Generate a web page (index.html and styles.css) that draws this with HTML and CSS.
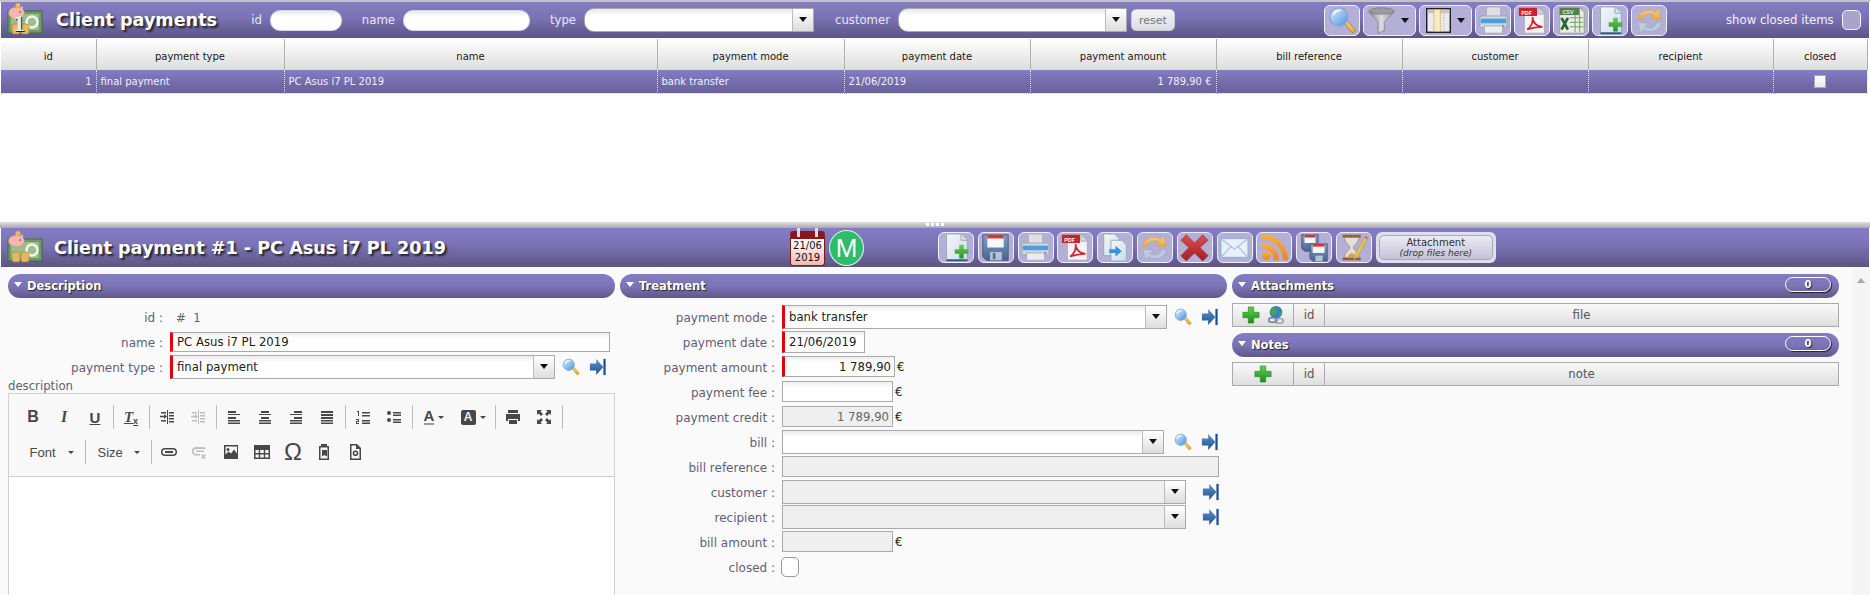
FILE: index.html
```html
<!DOCTYPE html>
<html lang="en">
<head>
<meta charset="utf-8">
<title>Client payments</title>
<link rel="stylesheet" href="styles.css">
</head>
<body>
<svg class="sprite" xmlns="http://www.w3.org/2000/svg" aria-hidden="true">
<defs>
<linearGradient id="gLens" x1="0" y1="0" x2="1" y2="1"><stop offset="0" stop-color="#e8f4ff"/><stop offset="1" stop-color="#3f8fe0"/></linearGradient>
<linearGradient id="gFunnel" x1="0" y1="0" x2="1" y2="0"><stop offset="0" stop-color="#7d7d7d"/><stop offset=".5" stop-color="#e2e2e2"/><stop offset="1" stop-color="#8d8d8d"/></linearGradient>
<linearGradient id="gPage" x1="0" y1="0" x2="1" y2="1"><stop offset="0" stop-color="#ffffff"/><stop offset="1" stop-color="#cfe0f2"/></linearGradient>
<linearGradient id="gPlus" x1="0" y1="0" x2="0" y2="1"><stop offset="0" stop-color="#5fd04a"/><stop offset="1" stop-color="#1b8e1b"/></linearGradient>
<linearGradient id="gOrange" x1="0" y1="0" x2="0" y2="1"><stop offset="0" stop-color="#ffd77a"/><stop offset="1" stop-color="#eda52f"/></linearGradient>
<linearGradient id="gRed" x1="0" y1="0" x2="0" y2="1"><stop offset="0" stop-color="#e2423f"/><stop offset="1" stop-color="#a30f14"/></linearGradient>
<linearGradient id="gFloppy" x1="0" y1="0" x2="0" y2="1"><stop offset="0" stop-color="#7ba0c6"/><stop offset="1" stop-color="#3e5f86"/></linearGradient>
<linearGradient id="gRss" x1="0" y1="0" x2="0" y2="1"><stop offset="0" stop-color="#ffb13c"/><stop offset="1" stop-color="#f08410"/></linearGradient>
<linearGradient id="gGoto" x1="0" y1="0" x2="0" y2="1"><stop offset="0" stop-color="#5f93cf"/><stop offset="1" stop-color="#1f4f90"/></linearGradient>
</defs>
<symbol id="i-search" viewBox="0 0 32 32"><path d="M18 19l3-3 9 10c1 1.500-2 4.500-3.500 3.500z" fill="url(#gOrange)" stroke="#b8791e"/><circle cx="12" cy="12" r="10" fill="url(#gLens)" stroke="#7fa7cf" stroke-width="1.500"/><path d="M6 10a7 7 0 0 1 8-5" stroke="#fff" stroke-width="2" fill="none"/></symbol>
<symbol id="i-funnel" viewBox="0 0 32 32"><ellipse cx="15" cy="6" rx="14" ry="4" fill="#9a9a9a" stroke="#7a7a7a"/><path d="M1 6c2 4 9 9 10 12v12l7-3v-9c1-3 9-8 11-12-4 4-24 4-28 0z" fill="url(#gFunnel)" stroke="#777" stroke-width=".8"/></symbol>
<symbol id="i-cols" viewBox="0 0 32 32"><rect x="3" y="3" width="26" height="26" fill="#f2f2f2" stroke="#111" stroke-width="1.600"/><rect x="4" y="4" width="24" height="4" fill="#c9c9c9"/><rect x="11" y="4" width="7" height="24" fill="#fff3c4" stroke="#e0a020" stroke-dasharray="2 1"/><path d="M22 8v20" stroke="#cfcfcf"/></symbol>
<symbol id="i-print" viewBox="0 0 32 32"><rect x="8" y="1" width="16" height="11" fill="#e2e4e8" stroke="#a5a9b0"/><rect x="1" y="11" width="30" height="13" rx="2" fill="#d5dbe2" stroke="#9aa3ad"/><rect x="2" y="14" width="28" height="5" fill="#3f9ee0"/><rect x="6" y="22" width="20" height="8" fill="#f1f3f5" stroke="#a5a9b0"/><circle cx="27" cy="22" r="1" fill="#d44"/></symbol>
<symbol id="i-pdf" viewBox="0 0 32 32"><path d="M7 2h15l7 7v21H7z" fill="#fafafa" stroke="#aaa"/><path d="M22 2v7h7" fill="#ddd" stroke="#aaa"/><rect x="1" y="2" width="20" height="9" fill="#c9141c"/><path d="M10 26c5-3 7-9 6-14 0 6 5 11 11 11-6 0-12 1-17 3z" fill="none" stroke="#d3141c" stroke-width="1.800"/></symbol>
<symbol id="i-excel" viewBox="0 0 32 32"><path d="M3 2h22l5 5v23H3z" fill="#eef5e6" stroke="#8aa87a"/><rect x="3" y="2" width="22" height="8" fill="#4b7d3a"/><path d="M14 13h15M14 18h15M14 23h15M20 10v19M25 10v19" stroke="#5e9a4a"/><path d="M5 13l7 13M12 13L5 26" stroke="#1e5c1e" stroke-width="3"/></symbol>
<symbol id="i-new" viewBox="0 0 32 32"><path d="M5 1h16l7 7v23H5z" fill="url(#gPage)" stroke="#8aa"/><path d="M21 1v7h7" fill="#dbe7f2" stroke="#8aa"/><path d="M5 29h23v2H5z" fill="#24527f"/><path d="M19 13h5v5h5v5h-5v5h-5v-5h-5v-5h5z" fill="url(#gPlus)"/></symbol>
<symbol id="i-refresh" viewBox="0 0 32 32"><path d="M3 15C4 6 14 2 23 7l3-4 3 12-12-1 4-4C15 7 9 9 8 15z" fill="url(#gOrange)" stroke="#d9a445" stroke-width=".6"/><path d="M29 18c-1 9-11 13-20 8l-3 4-3-12 12 1-4 4c6 3 12 1 13-5z" fill="#bcd0de" stroke="#92a9ba" stroke-width=".6"/></symbol>
<symbol id="i-save" viewBox="0 0 32 32"><path d="M2 2h28v28H6l-4-4z" fill="url(#gFloppy)" stroke="#34506f"/><rect x="7" y="2" width="18" height="14" fill="#fff"/><rect x="7" y="2" width="18" height="4" fill="#d52a2a"/><rect x="10" y="21" width="13" height="9" fill="#b8c6d3"/><rect x="13" y="22" width="3" height="7" fill="#4d6c8c"/></symbol>
<symbol id="i-copy" viewBox="0 0 32 32"><path d="M3 1h12l5 5v19H3z" fill="url(#gPage)" stroke="#8aa"/><path d="M11 8h12l5 5v18H11z" fill="url(#gPage)" stroke="#8aa"/><path d="M9 18h7v-4l7 6-7 6v-4H9z" fill="#2a90dc"/></symbol>
<symbol id="i-del" viewBox="0 0 32 32"><path d="M7 2l9 9 9-9 6 6-9 8 9 9-6 6-9-9-9 9-6-6 9-9-9-8z" fill="url(#gRed)" stroke="#8f1216" stroke-width=".6"/></symbol>
<symbol id="i-mail" viewBox="0 0 32 32"><rect x="1" y="6" width="30" height="21" fill="#f0f6fd" stroke="#90b4d8" stroke-width="1.400"/><path d="M1 6l15 12L31 6M1 27l11-12M31 27L20 15" fill="none" stroke="#a7c4e2" stroke-width="1.400"/></symbol>
<symbol id="i-rss" viewBox="0 0 32 32"><circle cx="7" cy="25" r="5" fill="url(#gRss)"/><path d="M2 11c11 0 19 8 19 19h-6c0-8-5-13-13-13z" fill="url(#gRss)"/><path d="M2 1c16 0 29 13 29 29h-6C25 16 15 7 2 7z" fill="url(#gRss)"/></symbol>
<symbol id="i-multi" viewBox="0 0 32 32"><path d="M2 2h18v18H5l-3-3z" fill="url(#gFloppy)" stroke="#34506f"/><rect x="5" y="2" width="12" height="9" fill="#fff"/><rect x="5" y="2" width="12" height="3" fill="#d52a2a"/><path d="M11 12h19v19H14l-3-3z" fill="url(#gFloppy)" stroke="#34506f"/><rect x="14" y="12" width="13" height="10" fill="#fff"/><rect x="14" y="12" width="13" height="3" fill="#d52a2a"/><rect x="17" y="25" width="8" height="6" fill="#b8c6d3"/></symbol>
<symbol id="i-hour" viewBox="0 0 32 32"><rect x="4" y="2" width="20" height="3" fill="#8a5a22"/><rect x="4" y="27" width="20" height="3" fill="#8a5a22"/><path d="M6 5h16c0 6-6 8-6 11s6 5 6 11H6c0-6 6-8 6-11S6 11 6 5z" fill="#e8e6dc" stroke="#9a8a66"/><path d="M9 27c1-3 4-5 5-5s4 2 5 5z" fill="#d9a441"/><path d="M16 30l2-7 10-18 3 2-10 18z" fill="#ecc84a" stroke="#b7892a" stroke-width=".6"/><path d="M28 5l1-2 3 2-1 2z" fill="#d66"/></symbol>
<symbol id="i-goto" viewBox="0 0 20 20"><path d="M1 6h7V1l8 9-8 9v-5H1z" fill="url(#gGoto)"/><rect x="16" y="1" width="2.500" height="18" fill="#1f4f90"/></symbol>
<symbol id="i-plus" viewBox="0 0 20 20"><path d="M7 1h6v6h6v6h-6v6H7v-6H1V7h6z" fill="url(#gPlus)" stroke="#1d7d1d" stroke-width=".6"/></symbol>
<symbol id="i-globe" viewBox="0 0 20 20"><circle cx="10" cy="7" r="7" fill="#3d7fc4"/><path d="M5 3c3-1 6 0 6 3s-4 2-5 5c-2-2-3-6-1-8zM13 6l3 1-2 4z" fill="#4aa548"/><rect x="2" y="13" width="9" height="5" rx="2.500" fill="none" stroke="#6b7d90" stroke-width="1.600"/><rect x="9" y="14" width="9" height="5" rx="2.500" fill="none" stroke="#8a9bad" stroke-width="1.600"/></symbol>
<symbol id="i-pig" viewBox="0 0 36 34"><rect x="1" y="8" width="34" height="22" fill="#6f9a62" stroke="#466b3f"/><rect x="4" y="11" width="28" height="16" fill="#9dbd8f"/><circle cx="25" cy="19" r="5.500" fill="none" stroke="#f4f7ec" stroke-width="2.400"/><circle cx="11" cy="2.500" r="2.500" fill="#f0c040"/><ellipse cx="9.500" cy="10" rx="8" ry="6" fill="#f2b8b0" stroke="#c98a84" stroke-width=".6"/><path d="M13 5l3-2v4z" fill="#f2b8b0"/><circle cx="13" cy="9" r=".8" fill="#633"/><rect x="5" y="21" width="8" height="10" rx="2" fill="#e2b860" stroke="#a8823a" stroke-width=".6"/><rect x="14" y="21" width="8" height="10" rx="2" fill="#e2b860" stroke="#a8823a" stroke-width=".6"/></symbol>
<symbol id="e-indent" viewBox="0 0 16 16"><path d="M8 1h1v14H8zM10 3h5v1.500h-5zM10 6h5v1.500h-5zM10 9h5v1.500h-5zM10 12h5v1.500h-5zM2 3h5v1.500H2zM2 11h5v1.500H2zM1 6.800h4V5l3 2.500L5 10V8.200H1z"/></symbol>
<symbol id="e-left" viewBox="0 0 16 16"><path d="M2 2h8v2H2zM2 5h12v1H2zM2 8h8v2H2zM2 11h12v1.500H2zM2 13.500h12V15H2z"/></symbol>
<symbol id="e-center" viewBox="0 0 16 16"><path d="M4 2h8v2H4zM2 5h12v1H2zM4 8h8v2H4zM2 11h12v1.500H2zM2 13.500h12V15H2z"/></symbol>
<symbol id="e-right" viewBox="0 0 16 16"><path d="M6 2h8v2H6zM2 5h12v1H2zM6 8h8v2H6zM2 11h12v1.500H2zM2 13.500h12V15H2z"/></symbol>
<symbol id="e-just" viewBox="0 0 16 16"><path d="M2 2h12v2H2zM2 5h12v2H2zM2 8h12v2H2zM2 11h12v1.500H2zM2 13.500h12V15H2z"/></symbol>
<symbol id="e-num" viewBox="0 0 16 16"><path d="M2 2h2v5H3V3H2zM1 10h3v3H2v1h2v1H1v-3h2v-1H1zM7 3h8v1.500H7zM7 6h8v1.500H7zM7 11h8v1.500H7zM7 13.500h8V15H7z"/></symbol>
<symbol id="e-bul" viewBox="0 0 16 16"><circle cx="3" cy="4" r="2"/><circle cx="3" cy="11" r="2"/><path d="M7 3h8v1.500H7zM7 5.500h8V7H7zM7 10h8v1.500H7zM7 12.500h8V14H7z"/></symbol>
<symbol id="e-print" viewBox="0 0 16 16"><path d="M3 1h10v3H3zM1 5h14v7h-2v-2H3v2H1zM4 11h8v4H4z"/></symbol>
<symbol id="e-max" viewBox="0 0 16 16"><path d="M1 1h5L4.500 2.500 7 5 5 7 2.500 4.500 1 6zM15 1v5l-1.500-1.500L11 7 9 5l2.500-2.500L10 1zM1 15v-5l1.500 1.500L5 9l2 2-2.500 2.500L6 15zM15 15h-5l1.500-1.500L9 11l2-2 2.500 2.500L15 10z"/></symbol>
<symbol id="e-link" viewBox="0 0 16 16"><path d="M4 4h8a4 4 0 0 1 0 8H4a4 4 0 0 1 0-8zm0 1.500a2.500 2.500 0 0 0 0 5h8a2.500 2.500 0 0 0 0-5zM4 7h8v2H4z" fill-rule="evenodd"/></symbol>
<symbol id="e-unlink" viewBox="0 0 16 16"><path d="M4 3h7a4 4 0 0 1 3 2H4a2.500 2.500 0 0 0 0 5h4v1.500H4A4 4 0 0 1 4 3zM4 6.500h8V8H4zM10 10l1.500 1.500L13 10l1 1-1.500 1.500L14 14l-1 1-1.500-1.500L10 15l-1-1 1.500-1.500L9 11z"/></symbol>
<symbol id="e-image" viewBox="0 0 16 16"><path d="M1 1h14v14H1zm1.500 1.500v8l3-3 2.500 2 3-4 3 4v-7zM5 4a1.500 1.500 0 1 1 0 3 1.500 1.500 0 0 1 0-3z" fill-rule="evenodd"/></symbol>
<symbol id="e-table" viewBox="0 0 16 16"><path d="M0 1h16v14H0zm1.500 5v3h3.300V6zm4.700 0v3h3.600V6zm5 0v3h3.300V6zm-9.700 4.500v3h3.300v-3zm4.700 0v3h3.600v-3zm5 0v3h3.300v-3z" fill-rule="evenodd"/></symbol>
<symbol id="e-paste" viewBox="0 0 16 16"><path d="M5 0h6v2h2v14H3V2h2zM4.500 3.500v11h7v-11zM6 6h5v6.500L8.500 11 6 12.500z" fill-rule="evenodd"/></symbol>
<symbol id="e-tpl" viewBox="0 0 16 16"><path d="M3 0h7l4 4v12H3zm1.500 1.500v13h8V5H9V1.500zM8.500 6.500a2.800 2.800 0 1 1 0 5.600 2.800 2.800 0 0 1 0-5.600zm0 1.500a1.300 1.300 0 1 0 0 2.600 1.300 1.300 0 0 0 0-2.600z" fill-rule="evenodd"/></symbol>
</svg>

<section class="list-pane">
  <header class="bar list-bar">
    <svg class="logo"><use href="#i-pig"/></svg>
    <span class="logo-one">1</span>
    <h1 class="bar-title list-title">Client payments</h1>
    <label class="flabel fl-id">id</label><div class="finput fi-id"></div>
    <label class="flabel fl-name">name</label><div class="finput fi-name"></div>
    <label class="flabel fl-type">type</label>
    <div class="fsel fs-type"><span class="arrow"></span></div>
    <label class="flabel fl-cust">customer</label>
    <div class="fsel fs-cust"><span class="arrow"></span></div>
    <button class="reset">reset</button>
    <div class="tools top-tools">
      <span class="tb"><svg class="ti"><use href="#i-search"/></svg></span>
      <span class="tb tb-drop"><svg class="ti"><use href="#i-funnel"/></svg><i class="caret"></i></span>
      <span class="tb tb-drop"><svg class="ti"><use href="#i-cols"/></svg><i class="caret"></i></span>
      <span class="tb"><svg class="ti"><use href="#i-print"/></svg></span>
      <span class="tb"><svg class="ti" viewBox="0 0 32 32"><use href="#i-pdf"/><text x="3.500" y="9.500" class="pdf-t">PDF</text></svg></span>
      <span class="tb"><svg class="ti" viewBox="0 0 32 32"><use href="#i-excel"/><text x="6" y="9" class="csv-t">CSV</text></svg></span>
      <span class="tb"><svg class="ti"><use href="#i-new"/></svg></span>
      <span class="tb"><svg class="ti"><use href="#i-refresh"/></svg></span>
    </div>
    <span class="show-closed">show closed items</span>
    <span class="bar-check"></span>
  </header>
  <table class="grid">
    <colgroup><col class="c1"><col class="c2"><col class="c3"><col class="c4"><col class="c5"><col class="c6"><col class="c7"><col class="c8"><col class="c9"><col class="c10"></colgroup>
    <thead>
      <tr><th>id</th><th>payment type</th><th>name</th><th>payment mode</th><th>payment date</th><th>payment amount</th><th>bill reference</th><th>customer</th><th>recipient</th><th>closed</th></tr>
    </thead>
    <tbody>
      <tr><td class="num">1</td><td>final payment</td><td>PC Asus i7 PL 2019</td><td>bank transfer</td><td>21/06/2019</td><td class="num">1 789,90 €</td><td></td><td></td><td></td><td class="mid"><span class="cell-check"></span></td></tr>
    </tbody>
  </table>
</section>

<div class="splitter"><i></i><i></i><i></i><i></i></div>

<section class="detail-pane">
  <header class="bar detail-bar">
    <svg class="logo"><use href="#i-pig"/></svg>
    <h2 class="bar-title detail-title">Client payment #1 - PC Asus i7 PL 2019</h2>
    <div class="date-ico"><span class="date-rings"></span><span>21/06</span><span>2019</span></div>
    <div class="m-badge">M</div>
    <div class="tools detail-tools">
      <span class="tb"><svg class="ti"><use href="#i-new"/></svg></span>
      <span class="tb"><svg class="ti"><use href="#i-save"/></svg></span>
      <span class="tb"><svg class="ti"><use href="#i-print"/></svg></span>
      <span class="tb"><svg class="ti" viewBox="0 0 32 32"><use href="#i-pdf"/><text x="3.500" y="9.500" class="pdf-t">PDF</text></svg></span>
      <span class="tb"><svg class="ti"><use href="#i-copy"/></svg></span>
      <span class="tb"><svg class="ti"><use href="#i-refresh"/></svg></span>
      <span class="tb"><svg class="ti"><use href="#i-del"/></svg></span>
      <span class="tb"><svg class="ti"><use href="#i-mail"/></svg></span>
      <span class="tb"><svg class="ti"><use href="#i-rss"/></svg></span>
      <span class="tb"><svg class="ti"><use href="#i-multi"/></svg></span>
      <span class="tb"><svg class="ti"><use href="#i-hour"/></svg></span>
      <div class="attach"><div class="attach-in"><span>Attachment</span><em>(drop files here)</em></div></div>
    </div>
  </header>

  <div class="detail-body">
    <div class="col">
      <div class="sec"><i class="tri"></i>Description</div>
      <div class="rows">
        <div class="row"><span class="lbl">id :</span><span class="idval">#&nbsp;&nbsp;1</span></div>
        <div class="row"><span class="lbl">name :</span><div class="inp req w440 h20">PC Asus i7 PL 2019</div></div>
        <div class="row"><span class="lbl">payment type :</span><div class="sel req w385"><span class="seltxt">final payment</span><span class="arrow"></span></div><svg class="act act-s"><use href="#i-search"/></svg><svg class="act"><use href="#i-goto"/></svg></div>
      </div>
      <div class="desc-label">description</div>
      <div class="editor">
        <div class="ed-tools">
          <div class="ed-row">
            <span class="cb ed-b">B</span><span class="cb ed-i">I</span><span class="cb ed-u">U</span><i class="sep"></i>
            <span class="cb ed-tx"><span>T</span><small>x</small></span><i class="sep"></i>
            <span class="cb"><svg class="ci"><use href="#e-indent"/></svg></span><span class="cb dim"><svg class="ci"><use href="#e-indent"/></svg></span><i class="sep"></i>
            <span class="cb"><svg class="ci"><use href="#e-left"/></svg></span><span class="cb"><svg class="ci"><use href="#e-center"/></svg></span><span class="cb"><svg class="ci"><use href="#e-right"/></svg></span><span class="cb"><svg class="ci"><use href="#e-just"/></svg></span><i class="sep"></i>
            <span class="cb"><svg class="ci"><use href="#e-num"/></svg></span><span class="cb"><svg class="ci"><use href="#e-bul"/></svg></span><i class="sep"></i>
            <span class="cb cb-color"><span class="ed-a">A</span><i class="mini"></i></span><span class="cb cb-color"><span class="ed-abg">A</span><i class="mini"></i></span><i class="sep"></i>
            <span class="cb"><svg class="ci"><use href="#e-print"/></svg></span><span class="cb"><svg class="ci"><use href="#e-max"/></svg></span><i class="sep"></i>
          </div>
          <div class="ed-row">
            <span class="combo combo-f">Font<i class="mini"></i></span><i class="sep"></i>
            <span class="combo combo-s">Size<i class="mini"></i></span><i class="sep"></i>
            <span class="cb"><svg class="ci"><use href="#e-link"/></svg></span><span class="cb dim"><svg class="ci"><use href="#e-unlink"/></svg></span><span class="cb"><svg class="ci"><use href="#e-image"/></svg></span><span class="cb"><svg class="ci"><use href="#e-table"/></svg></span><span class="cb ed-om">Ω</span><span class="cb"><svg class="ci"><use href="#e-paste"/></svg></span><span class="cb"><svg class="ci"><use href="#e-tpl"/></svg></span>
          </div>
        </div>
        <div class="ed-body"></div>
      </div>
    </div>

    <div class="col">
      <div class="sec"><i class="tri"></i>Treatment</div>
      <div class="rows">
        <div class="row"><span class="lbl">payment mode :</span><div class="sel req w385"><span class="seltxt">bank transfer</span><span class="arrow"></span></div><svg class="act act-s"><use href="#i-search"/></svg><svg class="act"><use href="#i-goto"/></svg></div>
        <div class="row"><span class="lbl">payment date :</span><div class="inp req w83 h22">21/06/2019</div></div>
        <div class="row"><span class="lbl">payment amount :</span><div class="inp req w113 h21 rt">1 789,90</div><span class="eur">€</span></div>
        <div class="row"><span class="lbl">payment fee :</span><div class="inp w111 h21 rt"></div><span class="eur">€</span></div>
        <div class="row"><span class="lbl">payment credit :</span><div class="inp w111 h21 rt off">1 789,90</div><span class="eur">€</span></div>
        <div class="row"><span class="lbl">bill :</span><div class="sel w382"><span class="seltxt"></span><span class="arrow"></span></div><svg class="act act-s2"><use href="#i-search"/></svg><svg class="act"><use href="#i-goto"/></svg></div>
        <div class="row"><span class="lbl">bill reference :</span><div class="inp w437 h21 off"></div></div>
        <div class="row"><span class="lbl">customer :</span><div class="sel off w404"><span class="seltxt"></span><span class="arrow"></span></div><svg class="act act-g"><use href="#i-goto"/></svg></div>
        <div class="row"><span class="lbl">recipient :</span><div class="sel off w404"><span class="seltxt"></span><span class="arrow"></span></div><svg class="act act-g"><use href="#i-goto"/></svg></div>
        <div class="row"><span class="lbl">bill amount :</span><div class="inp w111 h21 off"></div><span class="eur">€</span></div>
        <div class="row"><span class="lbl">closed :</span><span class="form-check"></span></div>
      </div>
    </div>

    <div class="col col-right">
      <div class="sec"><i class="tri"></i>Attachments<span class="badge">0</span></div>
      <div class="mini-table">
        <span class="mt-act"><svg class="pl"><use href="#i-plus"/></svg><svg class="pl"><use href="#i-globe"/></svg></span><span class="mt-id">id</span><span class="mt-main">file</span>
      </div>
      <div class="sec sec-notes"><i class="tri"></i>Notes<span class="badge">0</span></div>
      <div class="mini-table">
        <span class="mt-act"><svg class="pl"><use href="#i-plus"/></svg></span><span class="mt-id">id</span><span class="mt-main">note</span>
      </div>
    </div>

    <div class="scroll"><i class="up"></i></div>
  </div>
</section>
</body>
</html>
```

FILE: styles.css
```css
* { box-sizing: border-box; }
html, body { margin: 0; padding: 0; }
body {
  width: 1870px;
  height: 595px;
  overflow: hidden;
  background: #fff;
  font-family: "DejaVu Sans", Verdana, sans-serif;
  font-size: 11.7px;
  color: #222;
}
.sprite { display: block; width: 0; height: 0; overflow: hidden; }
.pdf-t { font: bold 6px "Liberation Sans", sans-serif; fill: #fff; }
.csv-t { font: bold 6px "Liberation Sans", sans-serif; fill: #e8f2dd; }

/* shared bars */
.bar {
  display: flex;
  align-items: center;
  background: linear-gradient(#847dc4, #7a72b4 45%, #5b5585);
  color: #fff;
}
.logo { width: 36px; height: 34px; margin-left: 6px; flex: none; }
.bar-title {
  margin: 0;
  flex: none;
  font-size: 17.6px;
  font-weight: bold;
  white-space: nowrap;
  color: #fff;
  text-shadow: 2px 2px 2px #222;
}

/* list pane */
.list-pane { height: 222px; border-top: 2px solid #c4c4c4; background: #fff; overflow: hidden; }
.list-bar { height: 36px; margin: 0 1px; position: relative; }
.logo-one {
  position: absolute;
  left: 12px;
  top: 9px;
  font: bold 24px/24px "Liberation Serif", serif;
  color: #e9e9e9;
  text-shadow: 1px 1px 0 #222;
}
.list-title { width: 162px; margin-left: 13px; }
.flabel { display: block; font-size: 11.7px; color: #e6e6f6; text-align: right; padding-right: 8px; flex: none; white-space: nowrap; }
.fl-id { width: 53px; margin-left: -1px; }
.fl-name { width: 61px; }
.fl-type { width: 54px; }
.fl-cust { width: 84px; }
.finput { height: 21px; border-radius: 10px; background: linear-gradient(#e9e9e9, #fff 30%); border: 1px solid #d7d7e8; flex: none; }
.fi-id { width: 72px; }
.fi-name { width: 127px; }
.fsel { height: 24px; display: flex; justify-content: flex-end; background: linear-gradient(#e9e9e9, #fff 30%); border: 1px solid #aaa; border-radius: 10px 0 0 10px; flex: none; }
.fs-type { width: 230px; }
.fs-cust { width: 229px; }
.fsel .arrow { width: 21px; }
.reset {
  flex: none;
  width: 44px;
  height: 22px;
  margin-left: 4px;
  padding: 0;
  border: 1px solid #ccc;
  border-radius: 5px;
  background: linear-gradient(#f4f4f4, #dcdce4);
  color: #777;
  font: 11px "DejaVu Sans", sans-serif;
}
.tools { display: flex; align-items: center; flex: none; }
.top-tools { gap: 3px; margin-left: 149px; }
.tb {
  display: flex;
  align-items: center;
  justify-content: center;
  flex: none;
  width: 36px;
  height: 31px;
  border: 1px solid #efeff8;
  border-radius: 6px;
  background: #b3afd6;
}
.tb-drop { width: 53px; justify-content: flex-start; padding-left: 4px; gap: 4px; }
.ti { width: 29px; height: 29px; flex: none; opacity: .9; }
.caret { width: 0; height: 0; border: 4px solid transparent; border-top: 5px solid #111; border-bottom: 0; flex: none; }
.show-closed { margin-left: 59px; font-size: 11.7px; color: #f0f0fa; white-space: nowrap; width: 116px; flex: none; }
.bar-check { width: 19px; height: 20px; border: 1px solid #f2f2fa; border-radius: 5px; background: #a8a4cc; flex: none; }

.grid { width: 1866px; margin: 1px 0 0 1px; border-collapse: collapse; table-layout: fixed; font-size: 10px; }
.c1 { width: 95px; } .c2 { width: 188px; } .c3 { width: 373px; } .c4 { width: 187px; } .c5 { width: 186px; }
.c6 { width: 186px; } .c7 { width: 186px; } .c8 { width: 186px; } .c9 { width: 185px; } .c10 { width: 94px; }
.grid th {
  height: 31px;
  padding: 3px 0 0;
  font-weight: normal;
  color: #111;
  background: linear-gradient(#fff, #dcdcdc);
  border-right: 1px solid #b0b0b0;
  text-shadow: 0 0 1px #fff;
}
.grid td {
  height: 23px;
  padding: 1px 4px 0;
  color: #f0f0fa;
  background: linear-gradient(#847dc4, #736bab 55%, #6a6399);
  border-right: 1px dotted #e4e4e4;
  border-bottom: 1px dotted #c8c8c8;
  white-space: nowrap;
}
.grid .num { text-align: right; }
.grid .mid { text-align: center; }
.cell-check { display: block; width: 12px; height: 13px; margin: 0 auto; background: linear-gradient(#fff, #e8e8e8); border: 1px solid #aaa; }

/* splitter */
.splitter {
  height: 6px;
  display: flex;
  justify-content: center;
  align-items: flex-start;
  gap: 2px;
  padding-top: 1px;
  background: linear-gradient(#e0e0e0, #a8a8a8);
}
.splitter i { width: 3px; height: 3px; background: #fff; }

/* detail pane */
.detail-pane { height: 367px; background: #fafafa; overflow: hidden; }
.detail-bar { height: 39px; margin: 0 1px; }
.detail-title { width: 736px; margin-left: 11px; }
.date-ico {
  flex: none;
  width: 35px;
  height: 35px;
  margin-top: 1px;
  border: 1px solid #7a1a1a;
  border-top: 8px solid #8e1616;
  border-radius: 3px;
  display: flex;
  flex-direction: column;
  align-items: center;
  justify-content: center;
  background: linear-gradient(#fff, #f5b9b2);
  color: #111;
  font-size: 10px;
  line-height: 12px;
  position: relative;
}
.date-rings { position: absolute; top: -11px; left: 6px; width: 21px; height: 9px; border-left: 3px solid #ddd; border-right: 3px solid #ddd; }
.m-badge {
  flex: none;
  width: 35px;
  height: 36px;
  margin-left: 4px;
  border: 1px solid #e6f6ec;
  border-radius: 50%;
  background: #2dbb6c;
  color: #fff;
  font: 26px/34px "Liberation Sans", sans-serif;
  text-align: center;
}
.detail-tools { gap: 3.8px; margin-left: 74px; }
.attach {
  flex: none;
  width: 120px;
  height: 31px;
  padding: 2px;
  border: 1px dashed #e4e4ee;
  border-radius: 6px;
  background: #dcdcea;
}
.attach-in {
  height: 100%;
  border: 1px solid #a8a8bc;
  border-radius: 5px;
  background: linear-gradient(#ecebf4, #c4c2d8);
  display: flex;
  flex-direction: column;
  align-items: center;
  justify-content: center;
  color: #333;
  font-size: 10px;
  line-height: 11px;
}
.attach-in em { font-size: 9px; line-height: 10px; }

.detail-body { display: flex; gap: 5px; padding: 7px 0 0 8px; height: 328px; position: relative; }
.col { flex: none; width: 607px; }
.sec {
  display: flex;
  align-items: center;
  height: 24px;
  padding-left: 19px;
  border-radius: 12px;
  background: linear-gradient(#847dc4, #7c74b6 50%, #5f5889);
  color: #fff;
  font-size: 11.5px;
  font-weight: bold;
  text-shadow: 1px 1px 1px #222;
  position: relative;
}
.tri { position: absolute; left: 6px; top: 8px; width: 0; height: 0; border: 4px solid transparent; border-top: 5px solid #fff; border-bottom: 0; }
.badge {
  margin-left: auto;
  margin-right: 8px;
  width: 46px;
  height: 15px;
  margin-top: -3px;
  border: 1px solid #fff;
  border-radius: 8px;
  box-shadow: 1px 1px 1px #222;
  text-align: center;
  font-size: 10px;
  line-height: 13px;
}
.rows { margin-top: 6px; }
.row { display: flex; align-items: center; height: 25px; }
.lbl { flex: none; width: 155px; padding-top: 2px; margin-right: 7px; text-align: right; font-size: 12px; color: #5f5f78; white-space: nowrap; }
.idval { color: #666; font-size: 11.7px; margin-left: 6px; padding-top: 2px; }
.inp { flex: none; display: flex; align-items: center; padding: 0 3px 0 4px; border: 1px solid #aaa; background: linear-gradient(#efefef, #fff 30%); font-size: 11.7px; color: #222; white-space: nowrap; }
.sel { flex: none; display: flex; height: 24px; border: 1px solid #aaa; background: linear-gradient(#ececec, #fff 30%); font-size: 11.7px; color: #222; }
.seltxt { flex: 1; display: flex; align-items: center; padding-left: 4px; }
.arrow { flex: none; width: 21px; display: block; background: linear-gradient(#fff, #ddd); border-left: 1px solid #bbb; position: relative; }
.arrow::after { content: ""; position: absolute; left: 6px; top: 8px; border: 4px solid transparent; border-top: 5px solid #111; border-bottom: 0; }
.req { border-left: 3px solid #e8000b; }
.off, .inp.off, .sel.off { background: #efefef; color: #666; }
.rt { justify-content: flex-end; }
.w83 { width: 83px; } .w111 { width: 111px; } .w113 { width: 113px; } .w382 { width: 382px; }
.w385 { width: 385px; } .w404 { width: 404px; } .w437 { width: 437px; } .w440 { width: 440px; }
.h20 { height: 20px; } .h21 { height: 21px; } .h22 { height: 22px; }
.eur { margin-left: 2px; font-size: 11.7px; color: #222; }
.act { width: 18px; height: 18px; flex: none; margin-left: 9px; }
.act-s { margin-left: 7px; }
.act-s2 { margin-left: 10px; }
.act-g { margin-left: 16px; }
.form-check { width: 18px; height: 20px; margin-left: -1px; border: 1px solid #999; border-radius: 5px; background: #fff; }
.desc-label { height: 13px; margin-top: 1px; color: #5f5f78; font-size: 11.7px; line-height: 13px; }

/* editor */
.editor { border: 1px solid #d1d1d1; height: 210px; background: #fff; }
.ed-tools { height: 83px; padding: 9px 0 0 8.5px; background: #f8f8f8; border-bottom: 1px solid #d1d1d1; }
.ed-row { display: flex; align-items: center; height: 28px; margin-bottom: 7px; }
.cb { flex: none; width: 31px; height: 28px; display: flex; align-items: center; justify-content: center; fill: #474747; color: #474747; }
.ci { width: 16px; height: 16px; }
.dim { opacity: .32; }
.sep { flex: none; width: 1px; height: 24px; margin: 0 2px; background: #bcbcbc; }
.ed-b, .ed-i, .ed-u, .ed-tx, .ed-a, .ed-abg, .ed-om, .combo { font-family: "Liberation Sans", sans-serif; }
.ed-b { font-size: 16px; font-weight: bold; }
.ed-i { font: italic bold 16px "Liberation Serif", serif; }
.ed-u { font-size: 15px; font-weight: bold; text-decoration: underline; }
.ed-tx { font: italic bold 15px "Liberation Serif", serif; text-decoration: underline; }
.ed-tx small { font: bold 9px "Liberation Sans", sans-serif; margin-top: 8px; }
.cb-color { width: 39px; gap: 4px; }
.ed-a { font-size: 15px; font-weight: bold; border-bottom: 2px solid #9a9a9a; line-height: 14px; }
.ed-abg { width: 15px; height: 15px; border-radius: 2px; background: #474747; color: #eee; font-size: 12px; font-weight: bold; line-height: 15px; text-align: center; }
.mini { display: block; width: 0; height: 0; border: 3px solid transparent; border-top: 3px solid #474747; border-bottom: 0; flex: none; }
.ed-om { font-size: 24px; }
.combo { flex: none; display: flex; align-items: center; height: 28px; padding-left: 12px; color: #484848; font-size: 13px; }
.combo .mini { margin-left: auto; margin-right: 9px; border-width: 3.5px; border-bottom: 0; }
.combo-f { width: 65px; }
.combo-s { width: 61px; padding-left: 10px; }
.ed-body { height: 120px; background: #fff; }

/* right column */
.mini-table {
  display: flex;
  align-items: stretch;
  height: 24px;
  margin-top: 5px;
  border: 1px solid #aaa;
  background: linear-gradient(#f9f9f9, #dfdfdf);
  color: #555;
  font-size: 11.7px;
}
.mini-table > span { display: flex; align-items: center; justify-content: center; }
.mt-act { flex: none; width: 61px; gap: 7px; border-right: 1px solid #aaa; }
.mt-id { flex: none; width: 31px; border-right: 1px solid #aaa; }
.mt-main { flex: 1; }
.pl { width: 18px; height: 18px; flex: none; }
.sec-notes { margin-top: 6px; }
.scroll { position: absolute; right: 0; top: 0; bottom: 0; width: 18px; background: #f5f5f5; }
.up { position: absolute; left: 5px; top: 11px; width: 0; height: 0; border: 4px solid transparent; border-bottom: 5px solid #a8a8a8; border-top: 0; }
```
